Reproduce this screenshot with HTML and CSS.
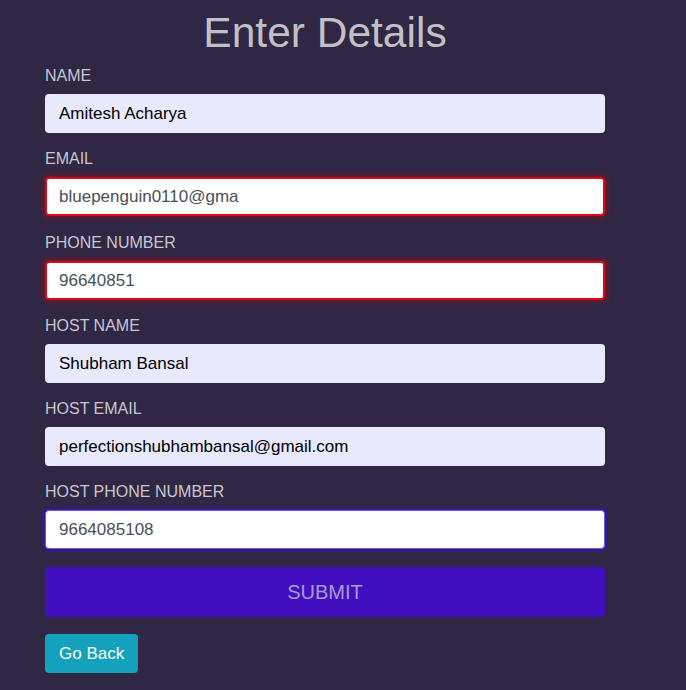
FILE: index.html
```html
<!DOCTYPE html>
<html>
<head>
<meta charset="utf-8">
<link rel="stylesheet" href="styles.css">
</head>
<body>
<div class="page">
  <form class="form">
    <h1 class="title">Enter Details</h1>
    <div class="group">
      <label class="label">NAME</label>
      <div class="input filled">Amitesh Acharya</div>
    </div>
    <div class="group">
      <label class="label">EMAIL</label>
      <div class="input invalid">bluepenguin0110@gma</div>
    </div>
    <div class="group">
      <label class="label">PHONE NUMBER</label>
      <div class="input invalid">96640851</div>
    </div>
    <div class="group">
      <label class="label">HOST NAME</label>
      <div class="input filled">Shubham Bansal</div>
    </div>
    <div class="group">
      <label class="label">HOST EMAIL</label>
      <div class="input filled">perfectionshubhambansal@gmail.com</div>
    </div>
    <div class="group">
      <label class="label">HOST PHONE NUMBER</label>
      <div class="input focused">9664085108</div>
    </div>
    <div class="submit">SUBMIT</div>
    <div class="back-row"><span class="back">Go Back</span></div>
  </form>
</div>
</body>
</html>
```
FILE: styles.css
```css
html, body {
  margin: 0;
  padding: 0;
  background: #2f2744;
  font-family: "Liberation Sans", Arial, sans-serif;
}
.page {
  padding: 0 81px 0 45px;
}
.form {
  width: 560px;
  display: flex;
  flex-direction: column;
}
.title {
  margin: 8px 0 0;
  font-size: 42.5px;
  font-weight: 400;
  line-height: 49px;
  text-align: center;
  color: #c3bfc7;
}
.group {
  display: flex;
  flex-direction: column;
  margin-top: 9px;
  margin-bottom: 7.3px;
}
.label {
  font-size: 16px;
  line-height: 19px;
  color: #c9c6cf;
  margin-bottom: 9px;
}
.input {
  box-sizing: border-box;
  height: 39px;
  border-radius: 4px;
  padding: 0 13px;
  font-size: 17px;
  line-height: 37px;
  border: 1px solid transparent;
  color: #495057;
  background: #fff;
}
.input.filled {
  background: #e8e9fd;
  color: #000;
}
.input.invalid {
  border: 2px solid #dc0a14;
  padding: 0 12px;
  line-height: 35px;
  box-shadow: 0 0 6px 2px rgba(200, 0, 20, 0.45);
}
.input.focused {
  border: 1px solid #6a5ae8;
  box-shadow: 0 0 0 3px rgba(60, 20, 170, 0.6);
}
.submit {
  margin-top: 10px;
  height: 50px;
  border-radius: 4px;
  background: #410fbf;
  color: #a99bd5;
  font-size: 20px;
  line-height: 50px;
  text-align: center;
}
.back-row {
  display: flex;
  margin-top: 17px;
}
.back {
  background: #13a1bd;
  color: #fff;
  border-radius: 4px;
  font-size: 17px;
  height: 39px;
  line-height: 39px;
  padding: 0 14px;
}
```
